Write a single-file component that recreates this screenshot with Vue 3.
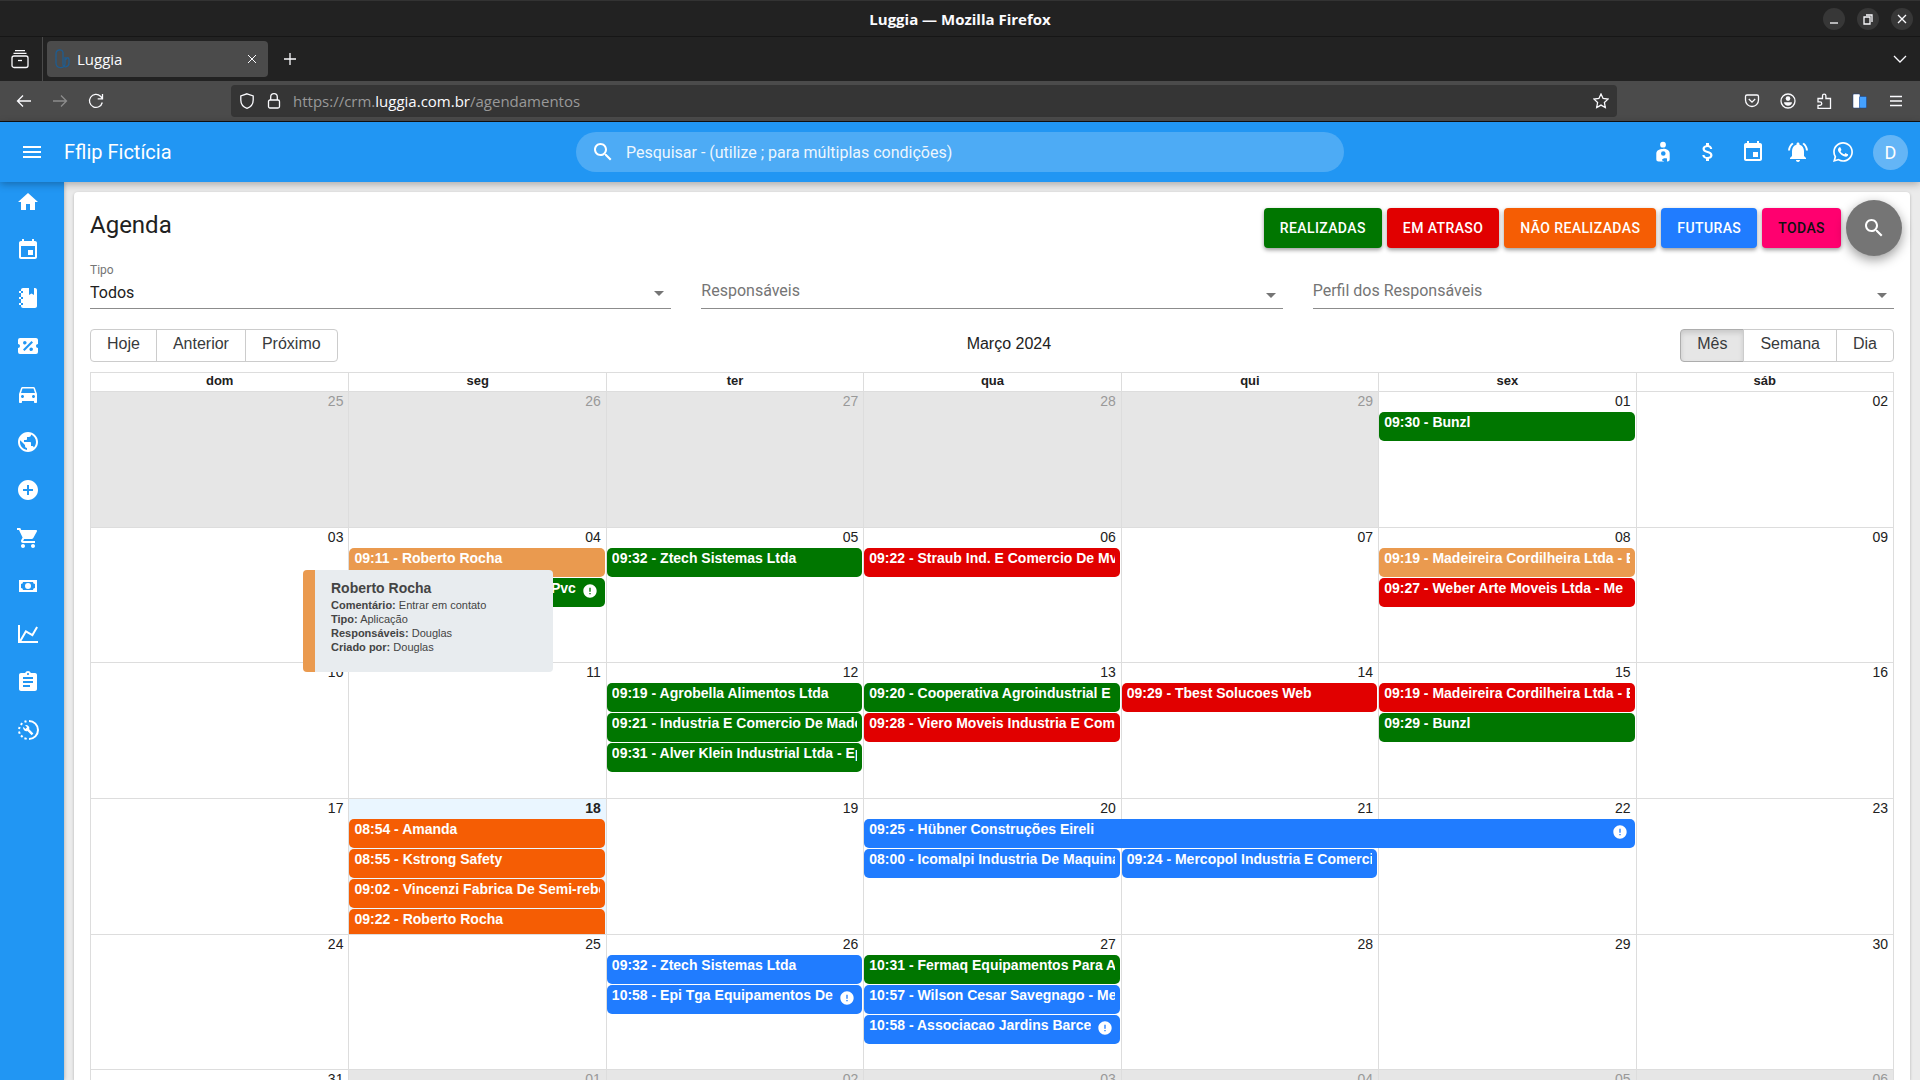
<template>
    <div class="window">
        <header class="titlebar">
            <span class="window-title">Luggia — Mozilla Firefox</span>
            <div class="window-buttons">
                <button v-for="b in windowButtons" :key="b.label" :aria-label="b.label">
                    <svg viewBox="0 0 16 16" class="line thick"><path :d="b.path" /></svg>
                </button>
            </div>
        </header>

        <nav class="tabs" aria-label="Abas">
            <button class="tab-view" aria-label="Firefox View">
                <svg viewBox="0 0 20 20" class="line thick">
                    <path d="M5 1.6h10M3.5 4.4h13" />
                    <rect x="2" y="7" width="16" height="11.5" rx="2" />
                    <path d="M8 11.5h4" />
                </svg>
            </button>
            <div class="tab">
                <svg viewBox="0 0 16 20" class="favicon">
                    <path d="M8 3c-1-3-7-3-7 2v9c0 6 9 6 9 1V8M8 3v13c1 3 6 2 6-2v-3c0-3-3-3-3 0" />
                </svg>
                <span>Luggia</span>
                <button class="tab-close" aria-label="Fechar aba">
                    <svg viewBox="0 0 16 16" class="line"><path d="M4 4l8 8M12 4l-8 8" /></svg>
                </button>
            </div>
            <button class="tab-new" aria-label="Nova aba">
                <svg viewBox="0 0 16 16" class="line thick"><path d="M8 2v12M2 8h12" /></svg>
            </button>
            <button class="tab-list" aria-label="Listar abas">
                <svg viewBox="0 0 16 16" class="line thick"><path d="M2 5l6 6 6-6" /></svg>
            </button>
        </nav>

        <div class="toolbar">
            <div class="nav-buttons">
                <button aria-label="Voltar">
                    <svg viewBox="0 0 16 16" class="line thick"><path d="M15 8H1.5M7 2.5L1.5 8 7 13.5" /></svg>
                </button>
                <button aria-label="Avançar" class="dim">
                    <svg viewBox="0 0 16 16" class="line thick"><path d="M1 8h13.5M9 2.5L14.5 8 9 13.5" /></svg>
                </button>
                <button aria-label="Recarregar">
                    <svg viewBox="0 0 16 16" class="line thick">
                        <path d="M14.3 9.5A6.5 6.5 0 1 1 12.5 3.2L14.2 5M14.5 1v4.8H9.7" />
                    </svg>
                </button>
            </div>
            <div class="urlbar">
                <svg viewBox="0 0 16 16" class="line thick">
                    <path d="M8 .8L14.2 3v4c0 4-2.5 7-6.2 8.3C4.3 14 1.8 11 1.8 7V3z" />
                </svg>
                <svg viewBox="0 0 16 16" class="line thick">
                    <rect x="2.5" y="7" width="11" height="8" rx="1.5" />
                    <path d="M4.7 7V4a3.3 3.3 0 0 1 6.600 0v3" />
                </svg>
                <span class="url">https://crm.<b>luggia.com.br</b>/agendamentos</span>
                <button aria-label="Favoritar">
                    <svg viewBox="0 0 16 16" class="line thick">
                        <path d="M8 1l2.1 4.5 4.9.6-3.6 3.4.9 5L8 12.1l-4.3 2.4.9-5L1 6.1l4.9-.6z" />
                    </svg>
                </button>
            </div>
            <div class="extensions">
                <button aria-label="Pocket">
                    <svg viewBox="0 0 16 16" class="line thick">
                        <path d="M3 2h10a1.500 1.500 0 0 1 1.500 1.500V7a6.500 6.500 0 0 1-13 0V3.500A1.500 1.500 0 0 1 3 2zM4.800 6L8 9.200 11.200 6" />
                    </svg>
                </button>
                <button aria-label="Conta">
                    <svg viewBox="0 0 16 16" class="line thick">
                        <circle cx="8" cy="8" r="7" />
                        <circle cx="8" cy="5.600" r="2.300" class="solid" />
                        <path class="solid" d="M4 9.300h8c0 4.500-8 4.500-8 0z" />
                    </svg>
                </button>
                <button aria-label="Extensões">
                    <svg viewBox="0 0 16 16" class="line thick">
                        <path d="M2 8V5.500h4.500V2.800a1.700 1.700 0 0 1 3.400 0v2.700H14.500V15.300H2v-3h2a1.700 1.700 0 0 0 0-3.500H2z" />
                    </svg>
                </button>
                <button aria-label="Contêineres">
                    <svg viewBox="0 0 16 16">
                        <rect x="1" y="1" width="7" height="14" rx="1" fill="#fff" stroke="#15418f" stroke-width=".5" />
                        <rect x="7.500" y="3.500" width="7" height="11.500" rx="1" fill="#45a1ff" stroke="#15418f" stroke-width=".5" />
                    </svg>
                </button>
                <button aria-label="Menu">
                    <svg viewBox="0 0 16 16" class="line thick"><path d="M2 3.500h12M2 8h12M2 12.500h12" /></svg>
                </button>
            </div>
        </div>

        <header class="appbar">
            <div class="brand">
                <button aria-label="Abrir menu">
                    <svg viewBox="0 0 24 24"><path d="M3 18h18v-2H3v2zm0-5h18v-2H3v2zm0-7v2h18V6H3z" /></svg>
                </button>
                <span>Fflip Fictícia</span>
            </div>
            <label class="search">
                <svg viewBox="0 0 24 24"><path :d="searchPath" /></svg>
                <input type="text" aria-label="Pesquisar" placeholder="Pesquisar - (utilize ; para múltiplas condições)" />
            </label>
            <div class="actions">
                <button v-for="a in actions" :key="a.label" :aria-label="a.label">
                    <svg viewBox="0 0 24 24"><path :d="a.path" fill-rule="evenodd" /></svg>
                </button>
                <button class="avatar">D</button>
            </div>
        </header>

        <div class="body">
            <nav class="sidebar" aria-label="Principal">
                <a v-for="m in menu" :key="m.label" href="#" :aria-label="m.label">
                    <svg viewBox="0 0 24 24"><path :d="m.path" /></svg>
                </a>
                <a href="#" aria-label="Ferramentas">
                    <svg viewBox="0 0 24 24">
                        <path class="ring" d="M13 3a9 9 0 0 1 0 18" />
                        <path class="ring" d="M10.500 3.200l-2 .6M6.200 5.200L4.800 6.800M3.600 9L3 11M3 13.500l.7 2.200M5 17.600l1.600 1.500M8.400 20.300l2.300.6" />
                        <path d="M17.400 15.500l-4.200-4.200a3.300 3.300 0 0 0-4.200-4.200l2.100 2.100-1.700 1.700-2.100-2.100a3.300 3.300 0 0 0 4.200 4.200l4.200 4.200z" />
                    </svg>
                </a>
            </nav>

            <main class="card">
                <div class="card-head">
                    <h1>Agenda</h1>
                    <div class="filters">
                        <button v-for="f in filters" :key="f.text" :class="f.kind">{{ f.text }}</button>
                        <button class="fab" aria-label="Pesquisar">
                            <svg viewBox="0 0 24 24"><path :d="searchPath" /></svg>
                        </button>
                    </div>
                </div>

                <div class="fields">
                    <div class="field">
                        <label for="tipo">Tipo</label>
                        <select id="tipo"><option>Todos</option></select>
                    </div>
                    <div class="field empty">
                        <select id="resp" aria-label="Responsáveis"><option>Responsáveis</option></select>
                    </div>
                    <div class="field empty">
                        <select id="perfil" aria-label="Perfil dos Responsáveis"><option>Perfil dos Responsáveis</option></select>
                    </div>
                </div>

                <div class="cal-toolbar">
                    <div class="group">
                        <button>Hoje</button>
                        <button>Anterior</button>
                        <button>Próximo</button>
                    </div>
                    <span class="month">Março 2024</span>
                    <div class="group">
                        <button
                            v-for="v in ['Mês', 'Semana', 'Dia']"
                            :key="v"
                            :class="{ active: v === view }"
                            @click="view = v"
                        >{{ v }}</button>
                    </div>
                </div>

                <div class="calendar">
                    <table>
                        <thead>
                            <tr><th v-for="d in weekdays" :key="d">{{ d }}</th></tr>
                        </thead>
                        <tbody>
                            <tr v-for="(week, w) in weeks" :key="w">
                                <td v-for="(day, i) in week" :key="i" :class="{ off: day.off, today: day.today }">
                                    <span class="date">{{ day.n }}</span>
                                    <template v-for="(e, k) in day.events" :key="k">
                                        <div v-if="!e" class="slot"></div>
                                        <div
                                            v-else
                                            class="event"
                                            :class="[e.kind, { wide: e.span, end: e.end }]"
                                            :style="e.span ? { width: `calc(${e.span * 100}% + ${e.span - 2}px)` } : null"
                                        >
                                            <span>{{ e.text }}</span>
                                            <svg v-if="e.alert" viewBox="0 0 24 24">
                                                <path d="M12 2C6.480 2 2 6.480 2 12s4.480 10 10 10 10-4.480 10-10S17.520 2 12 2zm1 15h-2v-2h2v2zm0-4h-2V7h2v6z" />
                                            </svg>
                                        </div>
                                    </template>
                                </td>
                            </tr>
                        </tbody>
                    </table>
                    <div class="popover" role="tooltip">
                        <strong>Roberto Rocha</strong>
                        <p><b>Comentário:</b> Entrar em contato</p>
                        <p><b>Tipo:</b> Aplicação</p>
                        <p><b>Responsáveis:</b> Douglas</p>
                        <p><b>Criado por:</b> Douglas</p>
                    </div>
                </div>
            </main>
        </div>
    </div>
</template>

<script setup>
import { ref } from "vue";

const view = ref("Mês");

const searchPath =
    "M15.500 14h-.79l-.28-.27C15.410 12.590 16 11.110 16 9.500 16 5.910 13.090 3 9.500 3S3 5.910 3 9.500 5.910 16 9.500 16c1.610 0 3.090-.59 4.230-1.570l.27.28v.79l5 4.990L20.490 19l-4.990-5zm-6 0C7.010 14 5 11.990 5 9.500S7.010 5 9.500 5 14 7.010 14 9.500 11.990 14 9.500 14z";
const eventPath =
    "M17 12h-5v5h5v-5zM16 1v2H8V1H6v2H5c-1.110 0-1.990.9-1.990 2L3 19c0 1.100.89 2 2 2h14c1.100 0 2-.9 2-2V5c0-1.100-.9-2-2-2h-1V1h-2zm3 18H5V8h14v11z";

const windowButtons = [
    { label: "Minimizar", path: "M4 12h8" },
    { label: "Restaurar", path: "M4 6h6v7H4zM6 4h6v7" },
    { label: "Fechar", path: "M4 4l8 8M12 4l-8 8" },
];

const actions = [
    {
        label: "Clientes",
        path: "M12 1.800a2.900 2.900 0 1 1 0 5.800 2.900 2.900 0 0 1 0-5.800zM12 8.800c4 0 6.700 1.800 6.700 5v5.500c0 1.500-1 2.200-2.200 2.200H16v-3c-2-.8-4.600 0-5 1.200 0 1 .8 1.200 1.800 1.200v.6H7.500c-1.200 0-2.200-.7-2.200-2.200v-5.500c0-3.200 2.700-4.800 6.700-4.800zM12.300 11.200a2.300 2.300 0 1 0 0 4.600 2.300 2.300 0 0 0 0-4.600z",
    },
    {
        label: "Financeiro",
        path: "M11.800 10.900c-2.270-.59-3-1.200-3-2.150 0-1.090 1.010-1.850 2.700-1.850 1.780 0 2.440.85 2.500 2.100h2.210c-.07-1.720-1.120-3.300-3.210-3.810V3h-3v2.160c-1.940.42-3.500 1.680-3.500 3.610 0 2.310 1.910 3.460 4.700 4.130 2.500.6 3 1.480 3 2.410 0 .69-.49 1.790-2.700 1.790-2.060 0-2.870-.92-2.980-2.100h-2.200c.12 2.190 1.760 3.420 3.680 3.830V21h3v-2.150c1.950-.37 3.500-1.500 3.500-3.550 0-2.840-2.430-3.810-4.700-4.400z",
    },
    { label: "Agenda", path: eventPath },
    {
        label: "Notificações",
        path: "M7.580 4.080L6.150 2.650C3.750 4.480 2.170 7.300 2.030 10.500h2c.15-2.650 1.510-4.970 3.550-6.420zm12.390 6.420h2c-.15-3.200-1.730-6.020-4.120-7.850l-1.420 1.430c2.020 1.450 3.390 3.770 3.540 6.420zM18 11c0-3.070-1.640-5.640-4.500-6.320V4c0-.83-.67-1.500-1.500-1.500s-1.500.67-1.500 1.500v.68C7.630 5.360 6 7.920 6 11v5l-2 2v1h16v-1l-2-2v-5zm-6 11c.14 0 .27-.01.4-.04.65-.14 1.180-.58 1.440-1.180.1-.24.15-.5.15-.78h-4c.01 1.100.9 2 2.010 2z",
    },
    {
        label: "WhatsApp",
        path: "M12.040 2C6.580 2 2.130 6.450 2.130 11.910C2.130 13.660 2.590 15.360 3.450 16.860L2.050 22L7.300 20.620C8.750 21.410 10.380 21.830 12.040 21.830C17.500 21.830 21.950 17.380 21.950 11.920C21.950 9.270 20.920 6.780 19.050 4.910C17.180 3.030 14.690 2 12.040 2M12.050 3.670C14.250 3.670 16.310 4.530 17.870 6.090C19.420 7.650 20.280 9.720 20.280 11.920C20.280 16.460 16.580 20.150 12.040 20.150C10.560 20.150 9.110 19.760 7.850 19L7.550 18.830L4.430 19.650L5.260 16.610L5.060 16.290C4.240 15 3.800 13.470 3.800 11.910C3.810 7.370 7.500 3.670 12.050 3.670M8.530 7.330C8.370 7.330 8.100 7.390 7.870 7.640C7.650 7.890 7 8.500 7 9.710C7 10.930 7.890 12.100 8 12.270C8.140 12.440 9.760 14.940 12.250 16C12.840 16.270 13.300 16.420 13.660 16.530C14.250 16.720 14.790 16.690 15.220 16.630C15.700 16.560 16.680 16.030 16.890 15.450C17.100 14.870 17.100 14.380 17.040 14.270C16.970 14.170 16.810 14.110 16.560 14C16.310 13.860 15.090 13.260 14.870 13.180C14.640 13.100 14.500 13.060 14.310 13.300C14.150 13.550 13.670 14.110 13.530 14.270C13.380 14.440 13.240 14.460 13 14.340C12.740 14.210 11.940 13.950 11 13.110C10.260 12.450 9.770 11.640 9.620 11.390C9.500 11.150 9.610 11 9.730 10.890C9.840 10.780 10 10.600 10.100 10.450C10.230 10.310 10.270 10.200 10.350 10.040C10.430 9.870 10.390 9.730 10.330 9.610C10.270 9.500 9.770 8.260 9.560 7.770C9.360 7.290 9.160 7.350 9 7.340C8.860 7.340 8.700 7.330 8.530 7.330Z",
    },
];

const menu = [
    { label: "Início", path: "M10 20v-6h4v6h5v-8h3L12 3 2 12h3v8z" },
    { label: "Agenda", path: eventPath },
    {
        label: "Contatos",
        path: "M3 7V5h2V4c0-1.110.9-2 2-2h6v7l2.500-1.500L18 9V2h1c1.050 0 2 .95 2 2v16c0 1.050-.95 2-2 2H7c-1.050 0-2-.95-2-2v-1H3v-2h2v-4H3v-2h2V7H3m4 4H5v2h2v-2m0-4V5H5v2h2m0 12v-2H5v2h2z",
    },
    {
        label: "Promoções",
        path: "M4 4a2 2 0 0 0-2 2v4c1.110 0 2 .9 2 2a2 2 0 0 1-2 2v4a2 2 0 0 0 2 2h16a2 2 0 0 0 2-2v-4a2 2 0 0 1-2-2c0-1.110.9-2 2-2V6c0-1.110-.9-2-2-2H4m11.500 3L17 8.500 8.500 17 7 15.500 15.500 7M8.810 7.040c.98 0 1.770.79 1.770 1.770a1.770 1.770 0 0 1-1.770 1.770c-.98 0-1.770-.79-1.770-1.770a1.770 1.770 0 0 1 1.770-1.770m6.380 6.380c.98 0 1.770.79 1.770 1.770a1.770 1.770 0 0 1-1.770 1.770c-.98 0-1.770-.79-1.770-1.770a1.770 1.770 0 0 1 1.770-1.770z",
    },
    {
        label: "Veículos",
        path: "M18.920 6.010C18.720 5.420 18.160 5 17.500 5h-11c-.66 0-1.210.42-1.420 1.010L3 12v8c0 .55.45 1 1 1h1c.55 0 1-.45 1-1v-1h12v1c0 .55.45 1 1 1h1c.55 0 1-.45 1-1v-8l-2.080-5.990zM6.500 16c-.83 0-1.500-.67-1.500-1.500S5.670 13 6.500 13s1.500.67 1.500 1.500S7.330 16 6.500 16zm11 0c-.83 0-1.500-.67-1.500-1.500s.67-1.500 1.500-1.500 1.500.67 1.500 1.500-.67 1.500-1.500 1.500zM5 11l1.500-4.500h11L19 11H5z",
    },
    {
        label: "Site",
        path: "M12 2C6.480 2 2 6.480 2 12s4.480 10 10 10 10-4.480 10-10S17.520 2 12 2zm-1 17.930c-3.950-.49-7-3.850-7-7.930 0-.62.08-1.210.21-1.790L9 15v1c0 1.100.9 2 2 2v1.930zm6.900-2.540c-.26-.81-1-1.390-1.900-1.390h-1v-3c0-.55-.45-1-1-1H8v-2h2c.55 0 1-.45 1-1V7h2c1.100 0 2-.9 2-2v-.41c2.930 1.190 5 4.060 5 7.410 0 2.080-.8 3.970-2.100 5.390z",
    },
    {
        label: "Adicionar",
        path: "M12 2C6.480 2 2 6.480 2 12s4.480 10 10 10 10-4.480 10-10S17.520 2 12 2zm5 11h-4v4h-2v-4H7v-2h4V7h2v4h4v2z",
    },
    {
        label: "Vendas",
        path: "M7 18c-1.100 0-1.990.9-1.990 2S5.900 22 7 22s2-.9 2-2-.9-2-2-2zM1 2v2h2l3.600 7.590-1.350 2.450c-.16.28-.25.61-.25.96 0 1.100.9 2 2 2h12v-2H7.420c-.14 0-.25-.11-.25-.25l.03-.12.9-1.630h7.450c.75 0 1.410-.41 1.750-1.030l3.580-6.490c.08-.14.12-.31.12-.48 0-.55-.45-1-1-1H5.210l-.94-2H1zm16 16c-1.100 0-1.990.9-1.990 2s.89 2 1.990 2 2-.9 2-2-.9-2-2-2z",
    },
    {
        label: "Caixa",
        path: "M3 6h18v12H3V6m9 3a3 3 0 0 1 3 3 3 3 0 0 1-3 3 3 3 0 0 1-3-3 3 3 0 0 1 3-3M7 8a2 2 0 0 1-2 2v4a2 2 0 0 1 2 2h10a2 2 0 0 1 2-2v-4a2 2 0 0 1-2-2H7z",
    },
    {
        label: "Relatórios",
        path: "M16 11.780l4.240-7.330 1.730 1-5.230 9.050-6.510-3.750L5.460 19H22v2H2V3h2v14.540L9.500 8l6.500 3.780z",
    },
    {
        label: "Tarefas",
        path: "M19 3h-4.180C14.400 1.840 13.300 1 12 1c-1.300 0-2.400.84-2.820 2H5c-1.100 0-2 .9-2 2v14c0 1.100.9 2 2 2h14c1.100 0 2-.9 2-2V5c0-1.100-.9-2-2-2zm-7 0c.55 0 1 .45 1 1s-.45 1-1 1-1-.45-1-1 .45-1 1-1zm2 14H7v-2h7v2zm3-4H7v-2h10v2zm0-4H7V7h10v2z",
    },
];

const filters = [
    { text: "REALIZADAS", kind: "done" },
    { text: "EM ATRASO", kind: "late" },
    { text: "NÃO REALIZADAS", kind: "missed" },
    { text: "FUTURAS", kind: "future" },
    { text: "TODAS", kind: "all" },
];

const weekdays = ["dom", "seg", "ter", "qua", "qui", "sex", "sáb"];

const ev = (kind, text, extra = {}) => ({ kind, text, ...extra });

// eventos por dia do mês; null reserva a linha ocupada por um evento de vários dias
const events = {
    1: [ev("done", "09:30 - Bunzl")],
    4: [
        ev("soft", "09:11 - Roberto Rocha"),
        ev("done", "Pvc", { alert: true, end: true }),
    ],
    5: [ev("done", "09:32 - Ztech Sistemas Ltda")],
    6: [ev("late", "09:22 - Straub Ind. E Comercio De Mv")],
    8: [
        ev("soft", "09:19 - Madeireira Cordilheira Ltda - E"),
        ev("late", "09:27 - Weber Arte Moveis Ltda - Me"),
    ],
    12: [
        ev("done", "09:19 - Agrobella Alimentos Ltda"),
        ev("done", "09:21 - Industria E Comercio De Made"),
        ev("done", "09:31 - Alver Klein Industrial Ltda - Ep"),
    ],
    13: [
        ev("done", "09:20 - Cooperativa Agroindustrial E"),
        ev("late", "09:28 - Viero Moveis Industria E Com"),
    ],
    14: [ev("late", "09:29 - Tbest Solucoes Web")],
    15: [
        ev("late", "09:19 - Madeireira Cordilheira Ltda - E"),
        ev("done", "09:29 - Bunzl"),
    ],
    18: [
        ev("missed", "08:54 - Amanda"),
        ev("missed", "08:55 - Kstrong Safety"),
        ev("missed", "09:02 - Vincenzi Fabrica De Semi-rebo"),
        ev("missed", "09:22 - Roberto Rocha"),
    ],
    20: [
        ev("future", "09:25 - Hübner Construções Eireli", { span: 3, alert: true }),
        ev("future", "08:00 - Icomalpi Industria De Maquina"),
    ],
    21: [null, ev("future", "09:24 - Mercopol Industria E Comerci")],
    26: [
        ev("future", "09:32 - Ztech Sistemas Ltda"),
        ev("future", "10:58 - Epi Tga Equipamentos De", { alert: true }),
    ],
    27: [
        ev("done", "10:31 - Fermaq Equipamentos Para A"),
        ev("future", "10:57 - Wilson Cesar Savegnago - Me"),
        ev("future", "10:58 - Associacao Jardins Barce", { alert: true }),
    ],
};

// março começa numa sexta; fevereiro de 2024 tem 29 dias
const weeks = Array.from({ length: 6 }, (_, w) =>
    Array.from({ length: 7 }, (_, i) => {
        const d = w * 7 + i - 4;
        const off = d < 1 || d > 31;
        const n = d < 1 ? d + 29 : d > 31 ? d - 31 : d;
        return {
            n: String(n).padStart(2, "0"),
            off,
            today: d === 18,
            events: off ? [] : events[d] || [],
        };
    })
);
</script>

<style>
body {
    margin: 0;
    overflow: hidden;
}
</style>

<style scoped>
* {
    box-sizing: border-box;
}
button,
input,
select {
    font: inherit;
    color: inherit;
    background: none;
    border: 0;
    padding: 0;
    margin: 0;
}
svg {
    display: block;
    flex: none;
    fill: currentColor;
}
.line {
    fill: none;
    stroke: currentColor;
    stroke-width: 1;
}
.line.thick {
    stroke-width: 1.3;
}
.solid {
    fill: currentColor;
    stroke: none;
}
.window {
    height: 100vh;
    display: flex;
    flex-direction: column;
    overflow: hidden;
    font-family: Roboto, sans-serif;
    color: #212121;
}

/* janela do navegador */
.titlebar,
.tabs,
.toolbar {
    display: flex;
    align-items: center;
    flex: none;
    font-family: "Open Sans", sans-serif;
    font-size: 15px;
    color: #fbfbfe;
}
.titlebar {
    height: 37px;
    background: #222;
    border-top: 1px solid #333;
    border-bottom: 1px solid #161616;
    padding-right: 7px;
}
.window-title {
    flex: 1;
    text-align: center;
    font-weight: bold;
    padding-left: 97px;
}
.window-buttons {
    display: flex;
    gap: 12px;
}
.window-buttons button {
    width: 22px;
    height: 22px;
    border-radius: 50%;
    background: #373737;
    display: grid;
    place-items: center;
}
.window-buttons svg {
    width: 16px;
}
.tabs {
    height: 44px;
    background: #222;
}
.tab-view {
    width: 43px;
    height: 44px;
    border-right: 1px solid #4a4a4a;
    display: grid;
    place-items: center;
    padding-right: 3px;
}
.tab-view svg {
    width: 20px;
}
.tab {
    width: 221px;
    height: 36px;
    margin-left: 4px;
    padding: 0 8px;
    border-radius: 4px;
    background: #4b4b4b;
    display: flex;
    align-items: center;
    gap: 6px;
}
.favicon {
    width: 16px;
    fill: none;
    stroke: #1f5c8f;
    stroke-width: 1.3;
}
.tab-close {
    margin-left: auto;
}
.tab-close svg {
    width: 16px;
}
.tab-new {
    margin-left: 14px;
}
.tab-new svg,
.tab-list svg {
    width: 16px;
}
.tab-list {
    margin-left: auto;
    margin-right: 12px;
}
.toolbar {
    height: 41px;
    background: #4b4b4b;
    border-bottom: 1px solid #111;
    padding: 0 16px;
}
.toolbar svg {
    width: 16px;
}
.nav-buttons {
    display: flex;
    gap: 20px;
    width: 215px;
}
.nav-buttons .dim {
    color: #8c8c8c;
}
.urlbar {
    flex: 1;
    height: 32px;
    padding: 0 8px;
    border-radius: 4px;
    background: #353535;
    display: flex;
    align-items: center;
    gap: 11px;
}
.url {
    flex: 1;
    color: #999;
}
.url b {
    font-weight: normal;
    color: #fbfbfe;
}
.extensions {
    display: flex;
    justify-content: flex-end;
    gap: 20px;
    width: 287px;
}

/* barra do sistema */
.appbar {
    position: relative;
    z-index: 3;
    flex: none;
    height: 60px;
    display: grid;
    grid-template-columns: 1fr 40% 1fr;
    align-items: center;
    background: #2196f3;
    color: #fff;
    box-shadow: 0 2px 8px rgba(0, 0, 0, 0.3);
}
.brand {
    display: flex;
    align-items: center;
    gap: 20px;
    padding-left: 20px;
    font-size: 20px;
}
.appbar svg {
    width: 24px;
}
.search {
    height: 40px;
    padding: 0 15px;
    border-radius: 20px;
    background: rgba(255, 255, 255, 0.2);
    display: flex;
    align-items: center;
    gap: 11px;
    font-size: 16px;
}
.search input {
    flex: 1;
    outline: 0;
}
.search input::placeholder {
    color: #fff;
    opacity: 0.9;
}
.actions {
    display: flex;
    justify-content: flex-end;
    align-items: center;
    gap: 21px;
    padding-right: 12px;
}
.avatar {
    width: 35px;
    height: 35px;
    margin-left: -3px;
    border-radius: 50%;
    background: #64b5f6;
    font-size: 18px;
}
.body {
    flex: 1;
    min-height: 0;
    display: flex;
    background: #ebebeb;
}
.sidebar {
    width: 64px;
    flex: none;
    padding: 8px 0 0 16px;
    background: #2196f3;
    color: #fff;
    box-shadow: 0 0 4px rgba(0, 0, 0, 0.3);
}
.sidebar a {
    display: block;
    height: 48px;
    color: inherit;
}
.sidebar svg {
    width: 24px;
}
.ring {
    fill: none;
    stroke: currentColor;
    stroke-width: 2;
}
.card {
    flex: 1;
    min-width: 0;
    margin: 10px 10px 0;
    padding: 8px 16px 0;
    border-radius: 4px 4px 0 0;
    background: #fff;
    box-shadow: 0 1px 3px rgba(0, 0, 0, 0.25);
}
.card-head {
    display: flex;
    justify-content: space-between;
    height: 60px;
    margin-right: -8px;
}
h1 {
    margin: 10px 0 0;
    font-size: 24px;
    line-height: 30px;
    font-weight: 400;
}
.filters {
    display: flex;
    align-items: center;
    align-self: flex-start;
    gap: 5px;
}
.filters button {
    height: 40px;
    padding: 0 16px;
    border-radius: 4px;
    font-size: 14px;
    font-weight: 500;
    letter-spacing: 0.02857em;
    color: #fff;
    box-shadow: 0 2px 4px rgba(0, 0, 0, 0.4);
}
.filters .fab {
    width: 56px;
    height: 56px;
    border-radius: 50%;
    background: #757575;
    display: grid;
    place-items: center;
    box-shadow: 0 4px 12px rgba(0, 0, 0, 0.4);
}
.fab svg {
    width: 24px;
}
.done {
    background: #007600;
}
.late {
    background: #e10000;
}
.missed {
    background: #f55d04;
}
.future {
    background: #207cff;
}
.soft {
    background: #ea9a4f;
}
.filters .all {
    background: #ff006f;
    color: #111;
}
.fields {
    display: flex;
    gap: 30px;
}
.field {
    position: relative;
    flex: 1;
    height: 49px;
    border-bottom: 1px solid #8c8c8c;
    display: flex;
    flex-direction: column;
    font-size: 16px;
}
.field::after {
    content: "";
    position: absolute;
    right: 7px;
    bottom: 12px;
    border: 5px solid transparent;
    border-top-color: #757575;
    border-bottom: 0;
    pointer-events: none;
}
.field label {
    font-size: 12px;
    line-height: 20px;
    color: #757575;
}
.field select {
    flex: 1;
    appearance: none;
    padding-bottom: 3px;
}
.field.empty {
    color: #757575;
}
.field.empty::after {
    bottom: 10px;
}
.field.empty select {
    padding: 12px 0 0;
}
.cal-toolbar {
    display: flex;
    align-items: center;
    margin-top: 20px;
    margin-bottom: 10px;
    font-family: "Liberation Sans", sans-serif;
    font-size: 16px;
}
.group {
    display: flex;
    color: #373a3c;
}
.group button {
    height: 33px;
    padding: 0 16px 3px;
    border: 1px solid #ccc;
    margin-left: -1px;
}
.group button:first-child {
    margin-left: 0;
    border-radius: 4px 0 0 4px;
}
.group button:last-child {
    border-radius: 0 4px 4px 0;
}
.group .active {
    background: #e6e6e6;
    border-color: #adadad;
    box-shadow: inset 0 3px 5px rgba(0, 0, 0, 0.125);
}
.month {
    flex: 1;
    text-align: center;
    padding-bottom: 3px;
}

/* calendário */
.calendar {
    position: relative;
    height: 834px;
    font-family: "Liberation Sans", sans-serif;
}
table {
    height: 100%;
    display: flex;
    flex-direction: column;
    border: 1px solid #ddd;
}
thead,
th,
td {
    display: block;
}
tr {
    display: grid;
    grid-template-columns: repeat(7, 1fr);
}
tbody {
    flex: 1;
    display: flex;
    flex-direction: column;
}
tbody tr {
    flex: 1 1 0;
    min-height: 0;
    overflow: hidden;
}
tbody tr + tr {
    border-top: 1px solid #ddd;
}
th {
    padding: 0 3px 2px;
    border-bottom: 1px solid #ddd;
    font-size: 13px;
    line-height: 16px;
    text-align: center;
}
td {
    min-width: 0;
    padding: 0;
    font-size: 14px;
}
th + th,
td + td {
    border-left: 1px solid #ddd;
}
.off {
    background: #e6e6e6;
    color: #999;
}
.today {
    background: #eaf6ff;
}
.date {
    display: block;
    padding: 0 5px 2px 0;
    line-height: 18px;
    text-align: right;
}
.today .date {
    font-weight: bold;
}
.slot {
    height: 30px;
}
.event {
    display: flex;
    height: 29px;
    margin: 0 1px 1px 0;
    padding: 2px 5px;
    border-radius: 5px;
    color: #fff;
    font-weight: bold;
    line-height: 17px;
}
.event.wide {
    position: relative;
    z-index: 1;
}
.event.end {
    text-align: right;
}
.event span {
    flex: 1;
    min-width: 0;
    overflow: hidden;
    white-space: nowrap;
}
.event svg {
    width: 16px;
    height: 16px;
    margin: 3px 2px 0 6px;
}
.popover {
    position: absolute;
    z-index: 2;
    top: 198px;
    left: 213px;
    width: 250px;
    height: 102px;
    padding: 9px 16px;
    border-left: 12px solid #ea9a4f;
    border-radius: 4px;
    background: #e8ecef;
    color: #444;
    font-size: 11px;
    line-height: 14px;
}
.popover strong {
    font-size: 14px;
    line-height: 19px;
}
.popover p {
    margin: 0;
}
</style>
